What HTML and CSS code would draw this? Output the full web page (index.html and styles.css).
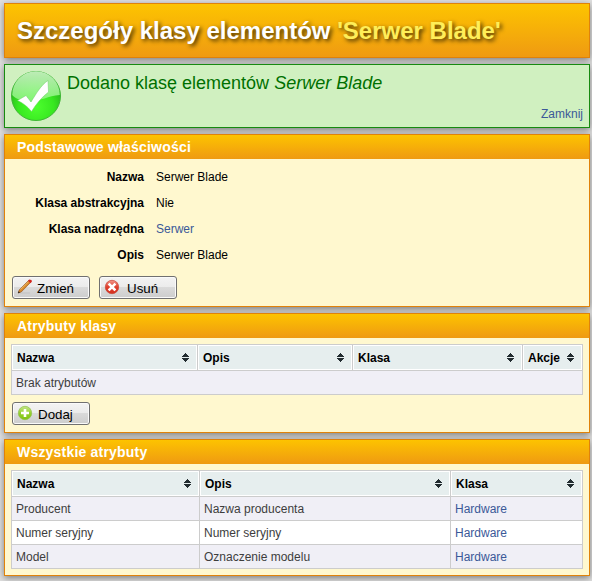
FILE: index.html
```html
<!DOCTYPE html>
<html lang="pl">
<head>
<meta charset="utf-8">
<title>Szczegóły klasy elementów</title>
<link rel="stylesheet" href="styles.css">
</head>
<body>
<svg class="defs" width="0" height="0">
  <symbol id="sort" viewBox="0 0 7 9"><path d="M3 0h1v1h1v1h1v1h1v1H0V3h1V2h1V1h1zM0 5h7v1H6v1H5v1H4v1H3V8H2V7H1V6H0z" fill="#222c30"/></symbol>
</svg>
<h1 class="title"><span>Szczegóły klasy elementów <span class="name">'Serwer Blade'</span></span></h1>

<div class="notice">
  <svg class="tick" width="52" height="52" viewBox="0 0 52 52">
    <defs>
      <radialGradient id="ball" cx=".5" cy=".72" r=".6"><stop offset="0" stop-color="#4dff2e"/><stop offset=".6" stop-color="#38e820"/><stop offset="1" stop-color="#27b51b"/></radialGradient>
      <linearGradient id="gloss" x1="0" y1="0" x2="0" y2="1"><stop offset="0" stop-color="#d8f6d2"/><stop offset="1" stop-color="#8cf57e"/></linearGradient>
    </defs>
    <circle cx="26" cy="26" r="24.5" fill="url(#ball)" stroke="#3fb636" stroke-width="1"/>
    <path d="M2.200 25A23.800 23.800 0 0 1 49.800 25C38 26 31 31 20 31 12 31 6 29 2.200 25z" fill="url(#gloss)" opacity=".85"/>
    <path d="M7.500 30.500L16 25.500L21 32C26 24 31 15 38 10.500L38.500 22C32 27 26 34 21.500 41.500C17 36 13 33 7.500 30.500z" fill="#fff" stroke="#6fcf66" stroke-width=".5"/>
  </svg>
  <p class="message">Dodano klasę elementów <em>Serwer Blade</em></p>
  <a class="close">Zamknij</a>
</div>

<section class="panel basic">
  <h2>Podstawowe właściwości</h2>
  <dl class="props">
    <dt>Nazwa</dt><dd>Serwer Blade</dd>
    <dt>Klasa abstrakcyjna</dt><dd>Nie</dd>
    <dt>Klasa nadrzędna</dt><dd><a>Serwer</a></dd>
    <dt>Opis</dt><dd>Serwer Blade</dd>
  </dl>
  <div class="actions">
    <button class="edit"><svg width="16" height="16" viewBox="0 0 16 16"><path d="M4 13.500h9v1H3z" fill="#aaa" opacity=".4"/><path d="M1.200 14l1-3L11.500 1.500l2 2L4.200 13z" fill="#d98a2b" stroke="#8d4b18" stroke-width=".6"/><path d="M3.500 10.500L11.500 2.800" stroke="#f6c46e" stroke-width=".8"/><path d="M1 14.200l.6-2 1.400 1.400z" fill="#222"/><path d="M11 1.700l1.200-1.200 2.300.5.400 1.800-1.500 1.400z" fill="#d3261d"/></svg><span>Zmień</span></button>
    <button class="delete"><svg width="16" height="16" viewBox="0 0 16 16"><defs><linearGradient id="red" x1="0" y1="0" x2="0" y2="1"><stop offset="0" stop-color="#f39a8d"/><stop offset=".5" stop-color="#df3f2c"/><stop offset="1" stop-color="#d4301f"/></linearGradient></defs><circle cx="8" cy="8" r="6.700" fill="url(#red)" stroke="#c84435" stroke-width=".7"/><path d="M5.500 5.500l5 5M10.500 5.500l-5 5" stroke="#fff" stroke-width="2.500" stroke-linecap="square"/></svg><span>Usuń</span></button>
  </div>
</section>

<section class="panel">
  <h2>Atrybuty klasy</h2>
  <table class="grid own">
    <colgroup><col class="c1"><col class="c2"><col class="c3"><col class="c4"></colgroup>
    <thead><tr>
      <th><div>Nazwa<svg><use href="#sort"/></svg></div></th>
      <th><div>Opis<svg><use href="#sort"/></svg></div></th>
      <th><div>Klasa<svg><use href="#sort"/></svg></div></th>
      <th><div>Akcje<svg><use href="#sort"/></svg></div></th>
    </tr></thead>
    <tbody><tr><td colspan="4">Brak atrybutów</td></tr></tbody>
  </table>
  <div class="actions">
    <button class="add"><svg width="16" height="16" viewBox="0 0 16 16"><defs><linearGradient id="green" x1="0" y1="0" x2="0" y2="1"><stop offset="0" stop-color="#c4e68c"/><stop offset=".5" stop-color="#96d12f"/><stop offset="1" stop-color="#7fc312"/></linearGradient></defs><circle cx="8" cy="8" r="6.700" fill="url(#green)" stroke="#8fbf4c" stroke-width=".7"/><path d="M8 4v8M4 8h8" stroke="#fff" stroke-width="2.600"/></svg><span>Dodaj</span></button>
  </div>
</section>

<section class="panel">
  <h2>Wszystkie atrybuty</h2>
  <table class="grid all">
    <colgroup><col class="c1"><col class="c2"><col class="c3"></colgroup>
    <thead><tr>
      <th><div>Nazwa<svg><use href="#sort"/></svg></div></th>
      <th><div>Opis<svg><use href="#sort"/></svg></div></th>
      <th><div>Klasa<svg><use href="#sort"/></svg></div></th>
    </tr></thead>
    <tbody>
      <tr><td>Producent</td><td>Nazwa producenta</td><td><a>Hardware</a></td></tr>
      <tr><td>Numer seryjny</td><td>Numer seryjny</td><td><a>Hardware</a></td></tr>
      <tr><td>Model</td><td>Oznaczenie modelu</td><td><a>Hardware</a></td></tr>
    </tbody>
  </table>
</section>
</body>
</html>
```
FILE: styles.css
```css
* { box-sizing: border-box; }
body {
  margin: 0;
  padding: 3px 2px 5px 4px;
  height: 581px;
  overflow: hidden;
  display: flex;
  flex-direction: column;
  gap: 6px;
  background: #e0e0e0;
  font: 12px "Liberation Sans", Arial, sans-serif;
  color: #000;
}
.defs { position: absolute; }
a { color: #3b5998; }
.title, .notice, .panel {
  margin: 0;
  flex: none;
  box-shadow: 0 2px 7px rgba(0, 0, 0, .45);
}
.title, .panel { border: 1px solid #e0820a; }
.title {
  height: 55px;
  padding: 0 12px;
  background: linear-gradient(#fdc400, #ef9a12);
  color: #fff;
  font-size: 24px;
  line-height: 54px;
  white-space: nowrap;
  text-shadow: 2px 2px 4px rgba(0, 0, 0, .75);
}
.name { color: #ffee58; }
.notice {
  height: 64px;
  border: 1px solid #178a10;
  background: #d0f0c0;
  display: flex;
  padding: 5px 6px 5px 5px;
}
.tick { flex: none; }
.message {
  margin: 2px 0 0 5px;
  flex: 1;
  color: #007000;
  font-size: 18px;
  line-height: 22px;
  white-space: nowrap;
}
.close { align-self: flex-end; line-height: 16px; }
.panel { background: #fff8cf; }
.basic { height: 173px; }
h2 {
  margin: 0;
  height: 24px;
  padding: 0 12px;
  background: linear-gradient(#fdc300, #ef9a12);
  color: #fff;
  font-size: 14px;
  line-height: 24px;
  letter-spacing: .2px;
}
.props {
  margin: 5px 0 8px;
  display: grid;
  grid-template-columns: 139px 1fr;
  grid-auto-rows: 26px;
  column-gap: 12px;
  line-height: 26px;
}
dt { font-weight: bold; text-align: right; }
dd { margin: 0; }
.actions { display: flex; gap: 9px; padding: 0 7px; }
button {
  width: 78px;
  height: 23px;
  padding: 0 4px;
  display: flex;
  align-items: center;
  border: 1px solid #707070;
  border-radius: 3px;
  background: linear-gradient(#f3f3f3, #ebebeb 50%, #dadada 50%, #cdcdcd);
  box-shadow: inset 0 0 0 1px #fafafa;
  font: 13.333px/20px "Liberation Sans", Arial, sans-serif;
  color: #000;
}
button svg { flex: none; margin-bottom: 1px; }
button span { margin: 2px 0 0 4px; }
.delete span { margin-left: 7px; }
.add span { margin-left: 5px; }
.grid {
  width: 572px;
  margin: 6px;
  table-layout: fixed;
  border-collapse: separate;
  border-spacing: 1px;
  background: #ccc;
}
.own { margin-bottom: 7px; }
.own + .actions { padding-bottom: 7px; }
.own .c1 { width: 185px; }
.own .c2 { width: 154px; }
.own .c3 { width: 169px; }
.own .c4 { width: 59px; }
.all .c1 { width: 187px; }
.all .c2 { width: 250px; }
.all .c3 { width: 131px; }
th { height: 25px; padding: 0; border: 1px solid #fff; background: #e6eeee; text-align: left; }
th div { display: flex; align-items: center; justify-content: space-between; padding: 0 7px 0 4px; line-height: 22px; }
th svg { width: 7px; height: 9px; }
td { height: 23px; padding: 0 4px; background: #f0eff6; color: #3d3d3d; line-height: 22px; }
tr:nth-child(even) td { background: #fff; }
```
